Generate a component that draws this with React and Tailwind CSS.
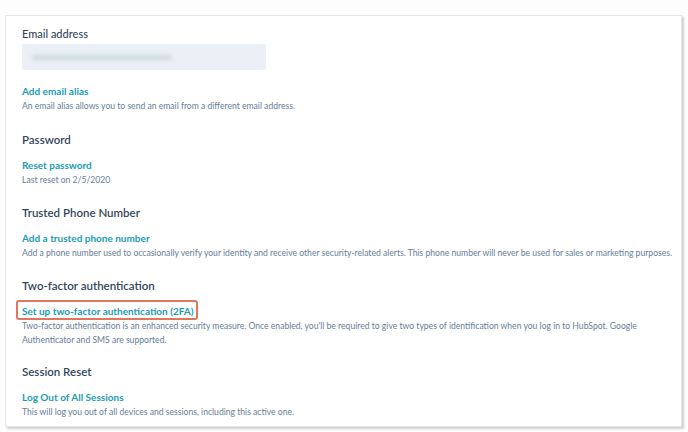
import React from "react";

function Section({ title, children, className = "" }) {
  return (
    <div className={className}>
      <h2 className="text-[11.5px] leading-[16px] font-semibold text-[#33475b]">{title}</h2>
      {children}
    </div>
  );
}

function Link({ children, className = "" }) {
  return (
    <div className={`text-[10px] leading-[15px] font-bold text-[#1a9cb5] ${className}`}>{children}</div>
  );
}

function Desc({ children, className = "" }) {
  return <div className={`text-[8.6px] leading-[14px] text-[#667e98] ${className}`}>{children}</div>;
}

export default function App() {
  return (
    <div
      className="w-[688px] h-[432px] bg-[#fdfdfd] pt-[15px] pl-[5px] pr-[6px]"
      style={{ fontFamily: "Lato, 'Noto Sans', sans-serif" }}
    >
      <div className="h-[412px] bg-white border border-[#e4e6e8] shadow-[2px_2px_2px_rgba(0,0,0,0.18)] pl-[16px] pt-[10px]">
        <div className="text-[11px] leading-[16px] text-[#33475b] font-medium">Email address</div>
        <div className="mt-[2px] w-[244px] h-[26px] bg-[#eaf0f6] rounded-[2px] flex items-center pl-[10px]">
          <div className="w-[140px] h-[5px] rounded-full bg-[#cfd8e2] blur-[2px]" />
        </div>
        <Link className="mt-[14px]">Add email alias</Link>
        <Desc>An email alias allows you to send an email from a different email address.</Desc>

        <Section title="Password" className="mt-[19px]">
          <Link className="mt-[10px]">Reset password</Link>
          <Desc>Last reset on 2/5/2020</Desc>
        </Section>

        <Section title="Trusted Phone Number" className="mt-[18px]">
          <Link className="mt-[10px]">Add a trusted phone number</Link>
          <Desc>
            Add a phone number used to occasionally verify your identity and receive other security-related alerts. This phone number will never be used for sales or marketing purposes.
          </Desc>
        </Section>

        <Section title="Two-factor authentication" className="mt-[18px]">
          <div className="relative mt-[10px] w-fit">
            <Link>Set up two-factor authentication (2FA)</Link>
            <div className="absolute -left-[6px] -right-[5px] -top-[4px] -bottom-[1px] border-2 border-[#e2765c] rounded-[3px]" />
          </div>
          <Desc className="w-[640px]">
            Two-factor authentication is an enhanced security measure. Once enabled, you'll be required to give two types of identification when you log in to HubSpot. Google Authenticator and SMS are supported.
          </Desc>
        </Section>

        <Section title="Session Reset" className="mt-[17px]">
          <Link className="mt-[10px]">Log Out of All Sessions</Link>
          <Desc>This will log you out of all devices and sessions, including this active one.</Desc>
        </Section>
      </div>
    </div>
  );
}
